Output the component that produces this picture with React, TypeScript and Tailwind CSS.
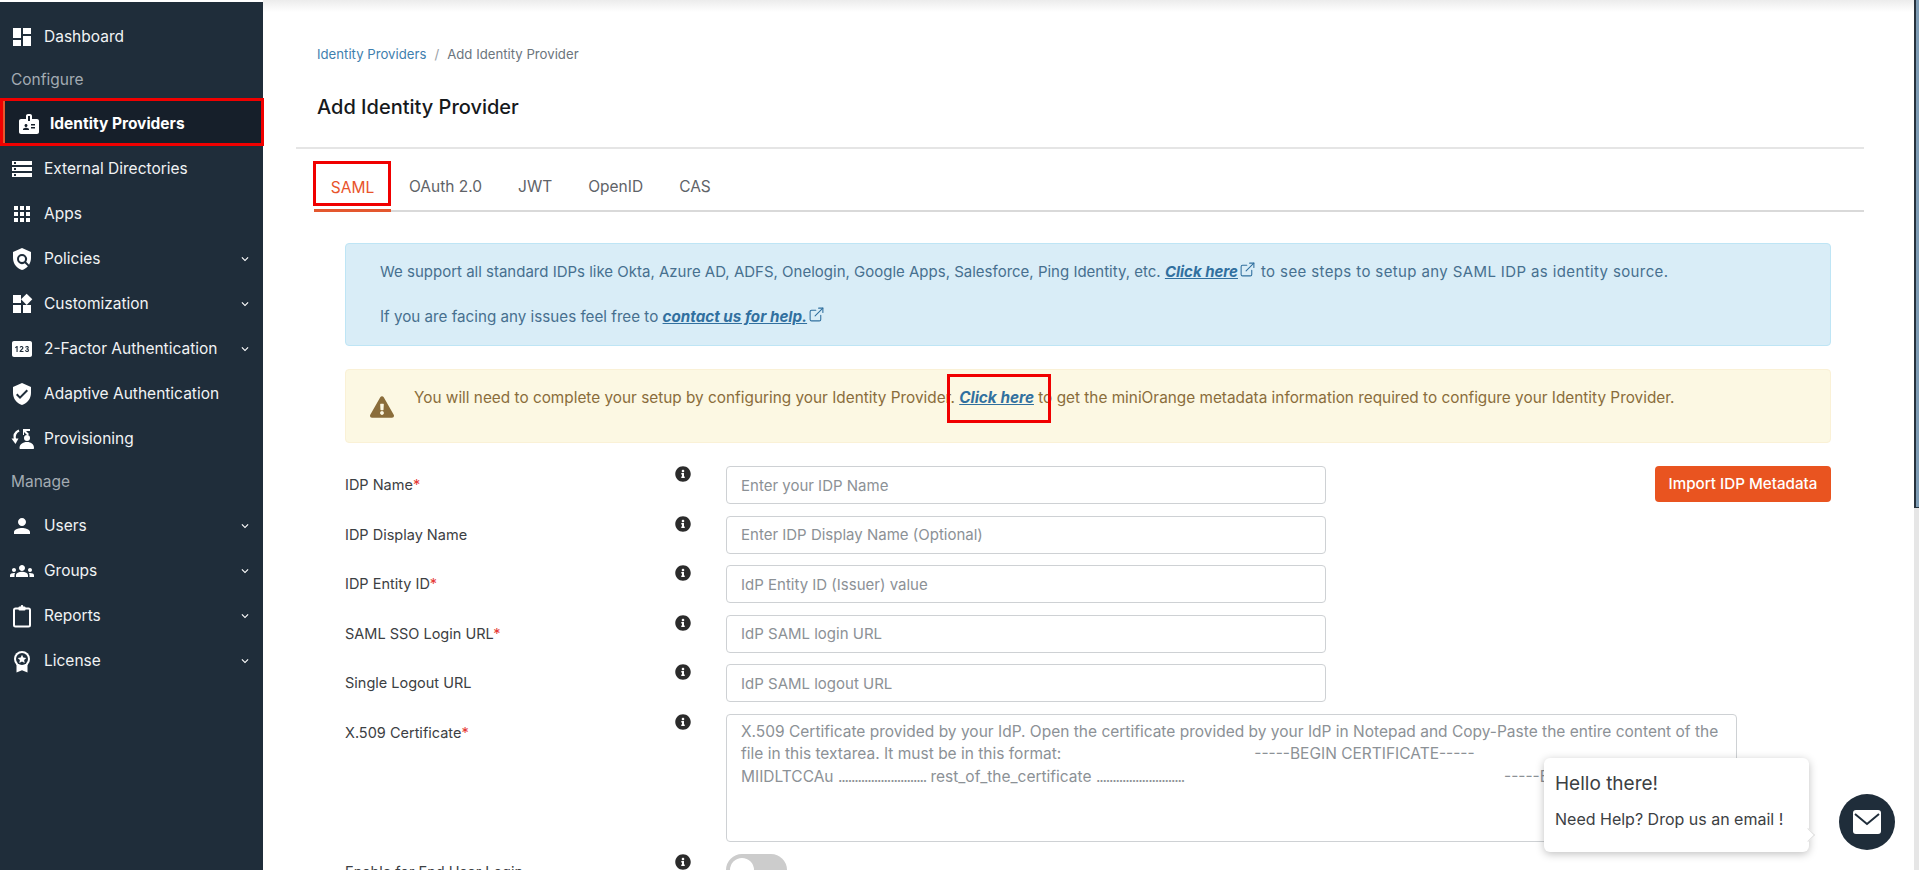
import {
  MdDashboard, MdBadge, MdStorage, MdApps, MdPolicy, MdWidgets, MdPin, MdVerifiedUser,
  MdPerson, MdGroups, MdKeyboardArrowDown,
} from "react-icons/md";
import { FaInfoCircle, FaExclamationTriangle } from "react-icons/fa";
import { ExternalLink } from "lucide-react";
import type { ComponentType } from "react";

type IconType = ComponentType<{ className?: string }>;
type NavItem = { label: string; icon: IconType; caret?: boolean };

function ProvisioningIcon({ className }: { className?: string }) {
  return (
    <svg viewBox="0 0 24 24" className={className} fill="currentColor">
      <path d="M9 3.5C5.5 5 4 8.5 5 12.5" fill="none" stroke="currentColor" strokeWidth="2.4" />
      <path d="M1.5 11.5h7L5.5 17z" />
      <path d="M13 2h7v2h-4l3 3-1.5 1.5L14 5v3h-1z" />
      <circle cx="17" cy="11" r="3" />
      <path d="M9.5 21c0-3.6 3.2-6 7.5-6s7 2.4 7 6c0 .6-.4 1-1 1H10.500c-.6 0-1-.4-1-1z" />
    </svg>
  );
}

function ReportsIcon({ className }: { className?: string }) {
  return (
    <svg viewBox="0 0 24 24" className={className} fill="currentColor">
      <rect x="4" y="4.500" width="16" height="18" rx="1.500" fill="none" stroke="currentColor" strokeWidth="2" />
      <rect x="8.500" y="2.500" width="7" height="4" rx="1" />
      <rect x="10.800" y="1" width="2.400" height="3" rx="1" />
    </svg>
  );
}

function LicenseIcon({ className }: { className?: string }) {
  return (
    <svg viewBox="0 0 24 24" className={className} fill="currentColor">
      <path d="M6.500 15v8.500l5.500-2.300 5.500 2.300V15z" />
      <circle cx="12" cy="10" r="8" />
      <circle cx="12" cy="10" r="6" fill="#1f2d3a" />
      <path d="m12 5.800 1.300 2.800 3 .3-2.200 2 .6 3-2.700-1.500-2.700 1.500.6-3-2.200-2 3-.3z" />
    </svg>
  );
}

const configure: NavItem[] = [
  { label: "External Directories", icon: MdStorage },
  { label: "Apps", icon: MdApps },
  { label: "Policies", icon: MdPolicy, caret: true },
  { label: "Customization", icon: MdWidgets, caret: true },
  { label: "2-Factor Authentication", icon: MdPin, caret: true },
  { label: "Adaptive Authentication", icon: MdVerifiedUser },
  { label: "Provisioning", icon: ProvisioningIcon },
];

const manage: NavItem[] = [
  { label: "Users", icon: MdPerson, caret: true },
  { label: "Groups", icon: MdGroups, caret: true },
  { label: "Reports", icon: ReportsIcon, caret: true },
  { label: "License", icon: LicenseIcon, caret: true },
];

function NavRow({ item }: { item: NavItem }) {
  const Icon = item.icon;
  return (
    <div className="flex h-[45px] items-center pl-[10px] pr-[11px] text-[15.500px] text-[#f1f3f4]">
      <Icon className="h-[24px] w-[24px] shrink-0 text-white" />
      <span className="ml-[10px] flex-1 whitespace-nowrap">{item.label}</span>
      {item.caret && <MdKeyboardArrowDown className="h-[14px] w-[14px] text-white" />}
    </div>
  );
}

function Sidebar() {
  return (
    <aside className="mt-[2px] w-[263px] shrink-0 bg-[#1f2d3a] pt-[12px]">
      <NavRow item={{ label: "Dashboard", icon: MdDashboard }} />
      <div className="flex h-[39px] items-center pl-[11px] pt-[3px] text-[15.500px] text-[#a3abb2]">Configure</div>
      <div className="h-[48px] w-[264px] border-[3px] border-[#f00000]">
        <div className="flex h-full items-center border-l-2 border-[#e4572e] bg-[#161f2a] pl-[12px] pt-[3px] text-[15.500px] font-bold text-white">
          <MdBadge className="h-[24px] w-[24px] shrink-0" />
          <span className="ml-[9px] whitespace-nowrap">Identity Providers</span>
        </div>
      </div>
      {configure.map((item) => <NavRow key={item.label} item={item} />)}
      <div className="flex h-[42px] items-center pl-[11px] text-[15.500px] text-[#a3abb2]">Manage</div>
      {manage.map((item) => <NavRow key={item.label} item={item} />)}
    </aside>
  );
}

function ExternalIcon() {
  return <ExternalLink strokeWidth={1.5} className="ml-[1px] inline-block h-[17px] w-[17px] -translate-y-[3px] text-[#31709f]" />;
}

function Info() {
  return <FaInfoCircle className="h-[16px] w-[16px] shrink-0 text-[#2b2b2b]" />;
}

function Field({ label, required, placeholder }: { label: string; required?: boolean; placeholder: string }) {
  return (
    <div className="flex h-[49.500px] pl-[82px]">
      <label className="w-[330px] pt-[8px] text-[14.500px] leading-[21px] text-[#3c4043]">
        {label}{required && <span className="text-[#e53935]">*</span>}
      </label>
      <Info />
      <input
        readOnly
        placeholder={placeholder}
        className="ml-[35px] h-[38px] w-[600px] rounded-[4px] border border-[#ced1d4] bg-white px-[14px] text-[15px] placeholder:text-[#8c9196]"
      />
    </div>
  );
}

const dots = "...........................";

export default function App() {
  return (
    <div className="flex h-[870px] w-[1919px] overflow-hidden bg-white font-['Inter',sans-serif]">
      <Sidebar />
      <main className="relative flex-1 overflow-hidden">
        <div className="h-[12px] bg-gradient-to-b from-[#ececec] to-white" />
        <nav className="ml-[54px] mt-[33px] flex text-[13.200px] leading-[18px]">
          <span className="text-[#3f7fae]">Identity Providers</span>
          <span className="mx-[8px] text-[#9aa0a6]">/</span>
          <span className="text-[#6c757d]">Add Identity Provider</span>
        </nav>
        <div className="ml-[33px] mr-[50px] mt-[30px] border-b-2 border-[#e5e5e5] pb-[26px] pl-[21px]">
          <h1 className="text-[20px] font-medium leading-[28px] text-[#16191c]">Add Identity Provider</h1>
        </div>
        <div className="ml-[51px] mr-[50px] mt-[13px] flex h-[50px] items-end border-b-2 border-[#d9d9d9] text-[15.500px] text-[#5f6368]">
          <div className="relative -mb-[2px] flex h-[48px] w-[77px] items-center justify-center border-b-[3px] border-[#e4572e] pt-[3px] text-[#e8532b]">
            SAML
            <div className="absolute left-[-1px] top-[-3px] h-[45px] w-[78px] border-[3px] border-[#f00000]" />
          </div>
          <div className="ml-[18px] flex h-[48px] items-center gap-[36px] pt-[2px]">
            <span>OAuth 2.0</span><span>JWT</span><span>OpenID</span><span>CAS</span>
          </div>
        </div>

        <div className="ml-[82px] mr-[83px] mt-[31px] h-[103px] rounded-[4px] border border-[#bee5f5] bg-[#d9edf7] px-[34px] pt-[17px] text-[15px] leading-[22px] text-[#47708f]">
          <p className="whitespace-nowrap">We support all standard IDPs like Okta, Azure AD, ADFS, Onelogin, Google Apps, Salesforce, Ping Identity, etc. <a className="font-bold italic text-[#31709f] underline">Click here</a><ExternalIcon /><span className="ml-[5px] tracking-[0.38px]">to see steps to setup any SAML IDP as identity source.</span></p>
          <p className="mt-[23px] text-[15.200px]">If you are facing any issues feel free to <a className="font-bold italic text-[#31709f] underline">contact us for help.</a><ExternalIcon /></p>
        </div>

        <div className="relative ml-[82px] mr-[83px] mt-[23px] flex h-[74px] rounded-[4px] border border-[#faf1d6] bg-[#fcf8e3] pl-[24px] pt-[17px] text-[15.350px] leading-[22px] text-[#8a6d3b]">
          <FaExclamationTriangle className="mr-[20px] mt-[8px] h-[24px] w-[24px] shrink-0 text-[#8a6d3b]" />
          <p className="whitespace-nowrap">You will need to complete your setup by configuring your Identity Provider. <a className="font-bold italic text-[#31709f] underline">Click here</a> to get the miniOrange metadata information required to configure your Identity Provider.</p>
          <div className="absolute left-[601px] top-[4px] h-[49px] w-[104px] border-[3px] border-[#f00000]" />
        </div>

        <div className="relative mt-[23px]">
          <Field label="IDP Name" required placeholder="Enter your IDP Name" />
          <Field label="IDP Display Name" placeholder="Enter IDP Display Name (Optional)" />
          <Field label="IDP Entity ID" required placeholder="IdP Entity ID (Issuer) value" />
          <Field label="SAML SSO Login URL" required placeholder="IdP SAML login URL" />
          <Field label="Single Logout URL" placeholder="IdP SAML logout URL" />
          <div className="flex pl-[82px]">
            <label className="w-[330px] pt-[8px] text-[14.500px] leading-[21px] text-[#3c4043]">X.509 Certificate<span className="text-[#e53935]">*</span></label>
            <Info />
            <div className="ml-[35px] h-[128px] w-[1011px] overflow-hidden whitespace-nowrap rounded-[4px] border border-[#ced1d4] px-[14px] pt-[6px] text-[15.500px] leading-[22.500px] text-[#8c9196]">
              X.509 Certificate provided by your IdP. Open the certificate provided by your IdP in Notepad and Copy-Paste the entire content of the<br />
              file in this textarea. It must be in this format:<span className="ml-[193px]">-----BEGIN CERTIFICATE-----</span><br />
              MIIDLTCCAu <span className="tracking-[-1.200px]">{dots}</span> rest_of_the_certificate <span className="tracking-[-1.200px]">{dots}</span><span className="ml-[320px]">-----END CERTIFICATE-----</span>
            </div>
          </div>
          <div className="mt-[12px] flex pl-[82px]">
            <label className="w-[330px] pt-[7px] text-[14.500px] leading-[21px] text-[#3c4043]">Enable for End User Login</label>
            <Info />
            <div className="ml-[35px] flex h-[32px] w-[61px] items-center rounded-full bg-[#cccccc] pl-[4px]">
              <div className="h-[24px] w-[24px] rounded-full bg-white" />
            </div>
          </div>
          <button className="absolute right-[83px] top-0 h-[36px] w-[176px] rounded-[4px] bg-[#e95420] text-[15.200px] font-medium text-white">Import IDP Metadata</button>
        </div>

        <div className="absolute left-[1281px] top-[758px] h-[94px] w-[265px] rounded-[6px] bg-white px-[11px] pt-[14px] text-[#3c4043] shadow-[0_2px_8px_rgba(0,0,0,0.25)]">
          <div className="text-[19px] leading-[24px]">Hello there!</div>
          <div className="mt-[12px] text-[16px] leading-[22px]">Need Help? Drop us an email !</div>
          <div className="absolute left-[259px] top-[72px] h-[10px] w-[10px] rotate-45 border-r border-t border-[#e0e0e0] bg-white" />
        </div>
        <div className="absolute left-[1576px] top-[794px] flex h-[56px] w-[56px] items-center justify-center rounded-full bg-[#1f2d3a]">
          <svg viewBox="0 0 28 24" className="h-[24px] w-[28px]">
            <rect width="28" height="24" rx="3" fill="#ffffff" />
            <path d="M2 4l12 10L26 4" fill="none" stroke="#1f2d3a" strokeWidth="2" />
          </svg>
        </div>
      </main>
      <div className="flex w-[5px] shrink-0 flex-col bg-[#e6e6e6]">
        <div className="h-[508px] border-b border-l-2 border-[#26323d] bg-[#7f9db5]" />
      </div>
    </div>
  );
}
